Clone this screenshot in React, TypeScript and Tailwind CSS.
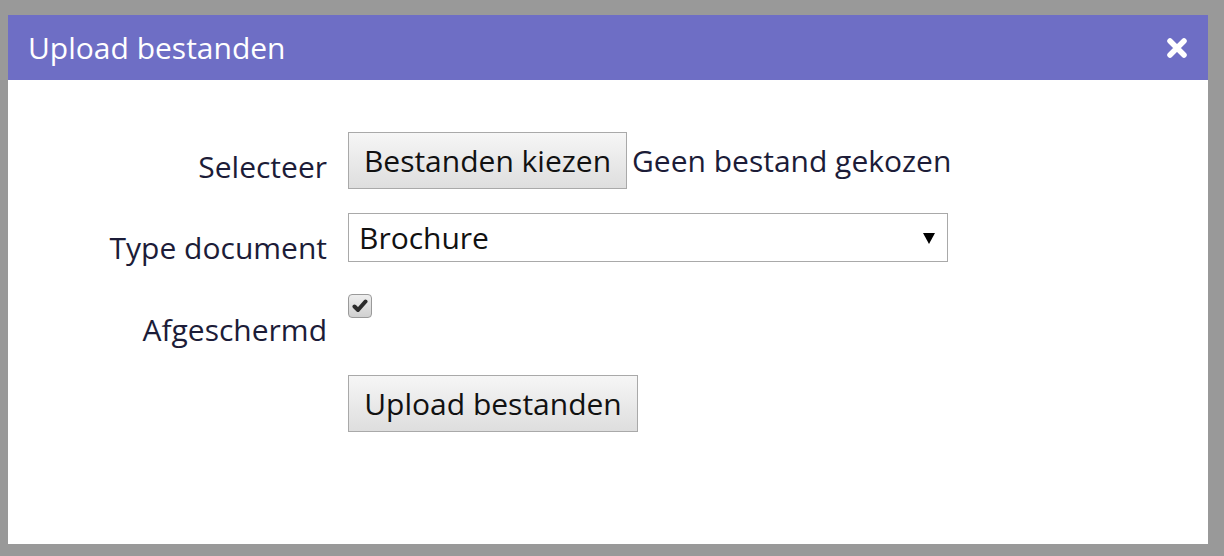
import React from 'react';

const font = { fontFamily: '"Open Sans", "Noto Sans", sans-serif' };

function Row({ label, children, labelPad }: { label: string; children: React.ReactNode; labelPad: string }) {
  return (
    <div className="flex h-[81px] items-start">
      <div className={`w-[319px] shrink-0 text-right text-[30px] leading-none text-[#1c1c38] ${labelPad}`}>{label}</div>
      <div className="ml-[21px] flex items-center">{children}</div>
    </div>
  );
}

export default function App() {
  return (
    <div className="h-[556px] w-[1224px] bg-[#999999] pt-[15px] pl-[8px]" style={font}>
      <div className="h-[529px] w-[1200px] bg-white">
        <div className="flex h-[65px] items-center justify-between bg-[#6e6ec5] pl-[20px] pr-[20px]">
          <h1 className="text-[30px] font-normal text-white">Upload bestanden</h1>
          <svg width="22" height="22" viewBox="0 0 22 22">
            <path d="M4 4 L18 18 M18 4 L4 18" stroke="white" strokeWidth="5.5" strokeLinecap="round" />
          </svg>
        </div>
        <div className="pt-[52px]">
          <Row label="Selecteer" labelPad="pt-[20px]">
            <button className="h-[57px] w-[279px] border border-[#a9a9a9] bg-gradient-to-b from-[#f6f6f6] to-[#dedede] text-[30px] leading-none text-[#111]">
              Bestanden kiezen
            </button>
            <span className="ml-[5px] text-[30px] leading-none text-[#1c1c38]">Geen bestand gekozen</span>
          </Row>
          <Row label="Type document" labelPad="pt-[20px]">
            <div className="flex h-[49px] w-[600px] items-center justify-between border border-[#a9a9a9] bg-white pl-[10px] pr-[12px] text-[30px] leading-none text-[#111]">
              <span>Brochure</span>
              <svg width="12" height="12" viewBox="0 0 12 12">
                <path d="M0 1 H12 L6 12 Z" fill="black" />
              </svg>
            </div>
          </Row>
          <Row label="Afgeschermd" labelPad="pt-[21px]">
            <div className="flex h-[24px] w-[24px] items-center justify-center rounded-[4px] border border-[#9a9a9a] bg-gradient-to-b from-[#eeeeee] to-[#d0d0d0]">
              <svg width="16" height="14" viewBox="0 0 16 14">
                <path d="M2.5 7.5 L6 11 L13.5 2.5" stroke="#2b2b2b" strokeWidth="4" fill="none" strokeLinecap="round" strokeLinejoin="round" />
              </svg>
            </div>
          </Row>
          <div className="flex">
            <div className="w-[319px]" />
            <button className="ml-[21px] h-[57px] w-[290px] border border-[#a9a9a9] bg-gradient-to-b from-[#f6f6f6] to-[#dedede] text-[30px] leading-none text-[#111]">
              Upload bestanden
            </button>
          </div>
        </div>
      </div>
    </div>
  );
}
